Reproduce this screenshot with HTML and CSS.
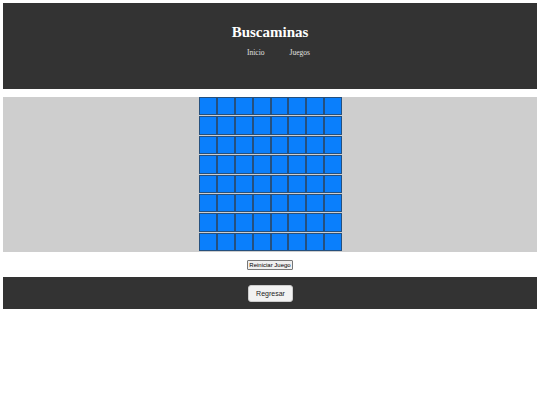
FILE: index.html
```html
<!DOCTYPE html>
<html lang="es">
<head>
<meta charset="utf-8">
<title>Buscaminas</title>
<link rel="stylesheet" href="styles.css">
</head>
<body>
<header class="top">
  <h1 class="title">Buscaminas</h1>
  <nav class="nav">
    <a href="#">Inicio</a>
    <a href="#">Juegos</a>
  </nav>
</header>
<main class="game">
  <div class="board" id="board"></div>
</main>
<div class="controls">
  <button class="reset">Reiniciar Juego</button>
</div>
<footer class="bottom">
  <button class="back">Regresar</button>
</footer>
<script src="script.js"></script>
</body>
</html>
```
FILE: script.js
```js
var b = document.getElementById('board');
for (var r = 0; r < 8; r++) {
  var row = document.createElement('div');
  row.className = 'row';
  for (var c = 0; c < 8; c++) {
    var cell = document.createElement('div');
    cell.className = 'cell';
    row.appendChild(cell);
  }
  b.appendChild(row);
}
```
FILE: styles.css
```css
html, body {
  margin: 0;
  padding: 0;
}
body {
  margin: 3px;
  font-family: "Liberation Serif", serif;
  background: #fff;
}
.top {
  background: #333;
  height: 86px;
  box-sizing: border-box;
  padding-top: 20px;
  text-align: center;
  color: #fff;
}
.title {
  margin: 0;
  font-size: 15px;
  line-height: 18px;
  font-weight: bold;
}
.nav {
  display: flex;
  justify-content: center;
  gap: 25px;
  margin-top: 7px;
  margin-left: 17px;
}
.nav a,
.nav a:visited {
  color: #e0e0e0;
  text-decoration: none;
  font-size: 7.5px;
}
.game {
  margin-top: 8px;
  background: #cecece;
  height: 155px;
  display: flex;
  justify-content: center;
}
.board {
  display: flex;
  flex-direction: column;
  gap: 1px;
  margin-left: 1px;
}
.row {
  display: flex;
}
.cell {
  width: 17.9px;
  height: 18.4px;
  box-sizing: border-box;
  background: #0a7ffc;
  border: 1px solid #25507e;
}
.controls {
  height: 25px;
  display: flex;
  justify-content: center;
  align-items: center;
}
.reset {
  font-family: "Liberation Sans", sans-serif;
  font-size: 6px;
  padding: 0;
  margin: 0;
  background: #efefef;
  border: 1px solid #777;
  border-radius: 1px;
  color: #000;
  width: 46px;
  height: 10px;
  line-height: 6px;
}
.bottom {
  background: #333;
  height: 32px;
  display: flex;
  justify-content: center;
  align-items: center;
}
.back {
  font-family: "Liberation Sans", sans-serif;
  font-size: 7px;
  width: 45px;
  height: 17px;
  padding: 0;
  margin: 0;
  margin-left: 1px;
  background: #f2f2f2;
  border: 1px solid #ccc;
  border-radius: 3px;
  color: #222;
}
```
